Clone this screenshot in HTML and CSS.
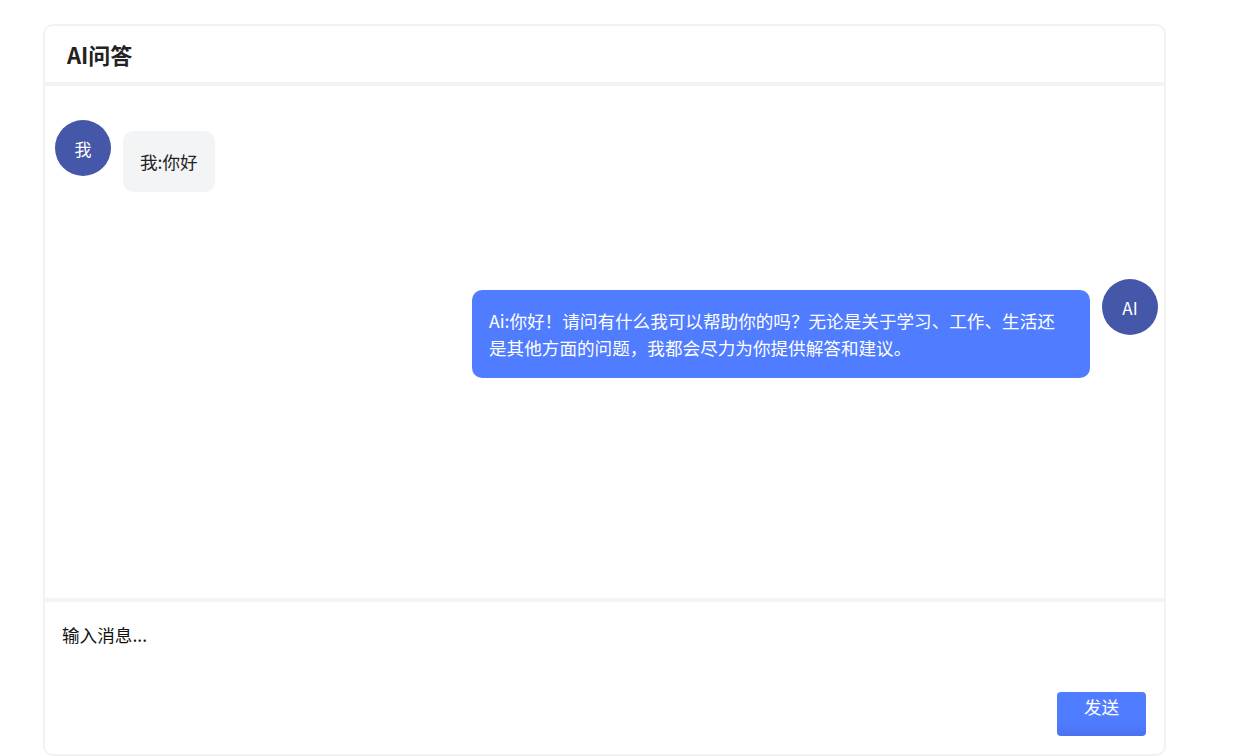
FILE: index.html
```html
<!DOCTYPE html>
<html lang="zh-CN">
<head>
  <meta charset="UTF-8">
  <meta name="viewport" content="width=device-width, initial-scale=1.0">
  <title>AI问答</title>
  <link rel="stylesheet" href="styles.css">
</head>
<body>
  <div class="page">
    <div class="chat-card">
      <!-- Header -->
      <div class="chat-header">AI问答</div>

      <!-- Messages -->
      <div class="chat-messages">
        <div class="msg msg-user">
          <div class="avatar">我</div>
          <div class="bubble">我:你好</div>
        </div>
        <div class="msg msg-ai">
          <div class="bubble">Ai:你好！请问有什么我可以帮助你的吗？无论是关于学习、工作、生活还是其他方面的问题，我都会尽力为你提供解答和建议。</div>
          <div class="avatar">AI</div>
        </div>
      </div>

      <!-- Input -->
      <div class="chat-footer">
        <textarea class="chat-input" placeholder="输入消息..."></textarea>
        <div class="actions">
          <button class="send-btn">发送</button>
        </div>
      </div>
    </div>
  </div>
</body>
</html>
```

FILE: styles.css
```css
/* General */
body {
  margin: 0;
  font-family: "Noto Sans CJK SC", "Noto Sans", sans-serif;
  background: #fff;
  color: #222;
  overflow: hidden;
}

.page {
  padding: 24px 0 0 43px;
}

/* Card */
.chat-card {
  width: 1123px;
  height: 732px;
  box-sizing: border-box;
  border: 2px solid #f2f2f3;
  border-radius: 10px;
  display: flex;
  flex-direction: column;
  overflow: hidden;
}

.chat-header {
  height: 55px;
  padding-left: 22px;
  padding-bottom: 1px;
  display: flex;
  align-items: center;
  font-size: 22px;
  font-weight: bold;
  color: #222;
  border-bottom: 4px solid #f2f3f5;
}

/* Messages */
.chat-messages {
  height: 512px;
  box-sizing: border-box;
  padding: 34px 6px 0 10px;
  display: flex;
  flex-direction: column;
  gap: 87px;
}

.msg {
  display: flex;
  align-items: flex-start;
  gap: 12px;
}

.msg-ai {
  justify-content: flex-end;
}

.avatar {
  width: 56px;
  height: 56px;
  flex-shrink: 0;
  border-radius: 50%;
  background-color: #4457a9;
  color: #fff;
  font-size: 17px;
  display: flex;
  align-items: center;
  justify-content: center;
}

.bubble {
  margin-top: 11px;
  padding: 17px;
  border-radius: 10px;
  font-size: 17.6px;
  line-height: 27px;
  max-width: 618px;
  box-sizing: border-box;
}

.msg-user .bubble {
  background-color: #f3f4f6;
  color: #222;
}

.msg-ai .bubble {
  padding-right: 24px;
  background-color: #507cff;
  color: #fff;
}

/* Footer */
.chat-footer {
  flex: 1;
  border-top: 4px solid #f2f3f5;
  padding: 20px 18px 18px 17px;
  display: flex;
  flex-direction: column;
  gap: 10px;
}

.chat-input {
  height: 60px;
  border: none;
  outline: none;
  resize: none;
  padding: 0;
  font-family: inherit;
  font-size: 17.6px;
  line-height: 26px;
  color: #111;
}

.chat-input::placeholder {
  color: #111;
}

.actions {
  display: flex;
  justify-content: flex-end;
}

.send-btn {
  width: 89px;
  height: 44px;
  padding: 2px 0 16px;
  border: none;
  border-radius: 4px;
  background: linear-gradient(#507cff 70%, #4a72f0);
  color: #fff;
  font-family: inherit;
  font-size: 17.6px;
  line-height: 26px;
  cursor: pointer;
}
```
